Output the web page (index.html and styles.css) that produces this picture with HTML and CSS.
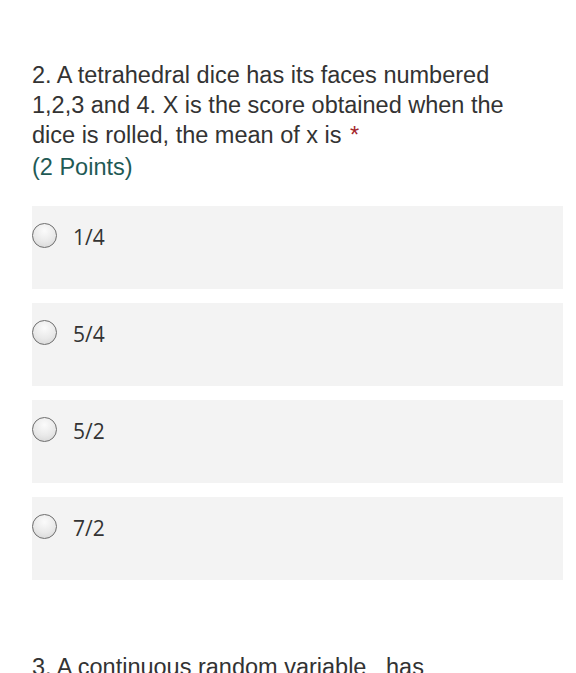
FILE: index.html
```html
<!DOCTYPE html>
<html lang="en">
<head>
<meta charset="utf-8">
<title>Quiz</title>
<link rel="stylesheet" href="styles.css">
</head>
<body>
<main class="form">
  <section class="question">
    <div class="q-title">2. A tetrahedral dice has its faces numbered 1,2,3 and 4. X is the score obtained when the dice is rolled, the mean of x is <span class="req">*</span></div>
    <div class="points">(2 Points)</div>
    <div class="options">
      <label class="option"><span class="radio"></span><span class="opt-text">1/4</span></label>
      <label class="option"><span class="radio"></span><span class="opt-text">5/4</span></label>
      <label class="option"><span class="radio"></span><span class="opt-text">5/2</span></label>
      <label class="option"><span class="radio"></span><span class="opt-text">7/2</span></label>
    </div>
  </section>
  <section class="question next">
    <div class="q-title">3. A continuous random variable&nbsp;&nbsp; has</div>
  </section>
</main>
</body>
</html>
```

FILE: styles.css
```css
html, body {
  margin: 0;
  padding: 0;
  background: #ffffff;
}
.form {
  padding: 60px 13px 0 32px;
  font-family: "Liberation Sans", Arial, sans-serif;
  color: #333333;
}
.q-title {
  font-size: 23.5px;
  line-height: 30px;
  padding-right: 40px;
}
.req {
  color: #a4262c;
  margin-left: 2px;
}
.points {
  font-size: 23.5px;
  line-height: 30px;
  margin-top: 2px;
  color: #1f5a55;
}
.options {
  margin-top: 24px;
  display: flex;
  flex-direction: column;
  gap: 14px;
}
.option {
  display: flex;
  align-items: flex-start;
  height: 83px;
  background: #f3f3f3;
  box-sizing: border-box;
  padding-top: 17px;
}
.radio {
  width: 25px;
  height: 25px;
  box-sizing: border-box;
  border: 1.5px solid #6e6e6e;
  border-radius: 50%;
  background: radial-gradient(circle at 50% 30%, #fbfbfb 0%, #e9e9e9 55%, #d2d2d2 100%);
  flex: none;
}
.opt-text {
  margin-left: 16px;
  margin-top: 1px;
  font-family: "Open Sans", sans-serif;
  font-size: 21px;
  line-height: 26px;
  color: #333333;
}
.next {
  margin-top: 72px;
}
```
